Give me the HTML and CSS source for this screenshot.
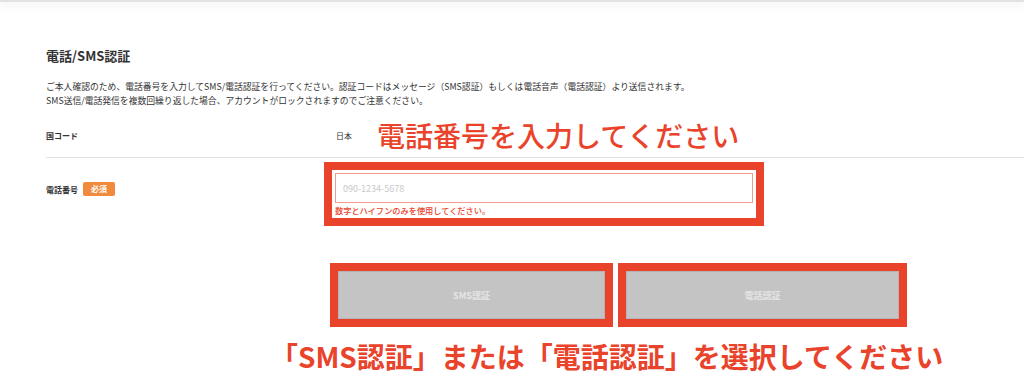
FILE: index.html
```html
<!DOCTYPE html>
<html lang="ja">
<head>
    <meta charset="UTF-8">
    <meta name="viewport" content="width=device-width, initial-scale=1.0">
    <title>電話/SMS認証</title>
    <link rel="stylesheet" href="styles.css">
</head>
<body>
    <div class="topbar"></div>
    <main class="page">
        <h1 class="title">電話/SMS認証</h1>
        <p class="lead">ご本人確認のため、電話番号を入力してSMS/電話認証を行ってください。認証コードはメッセージ（SMS認証）もしくは電話音声（電話認証）より送信されます。<br>SMS送信/電話発信を複数回繰り返した場合、アカウントがロックされますのでご注意ください。</p>

        <div class="row row-country">
            <div class="label">国コード</div>
            <div class="value">日本<span class="note note-top">電話番号を入力してください</span></div>
        </div>

        <div class="row row-phone">
            <div class="label"><span>電話番号</span><span class="badge">必須</span></div>
            <div class="field">
                <div class="mark mark-field">
                    <input class="phone" type="tel" placeholder="090-1234-5678">
                    <p class="error">数字とハイフンのみを使用してください。</p>
                </div>
            </div>
        </div>

        <div class="actions">
            <div class="mark mark-sms"><button class="btn" disabled>SMS認証</button></div>
            <div class="mark mark-tel"><button class="btn" disabled>電話認証</button></div>
        </div>

        <p class="note note-bottom">「SMS認証」または「電話認証」を選択してください</p>
    </main>
</body>
</html>
```

FILE: styles.css
```css
body {
    margin: 0;
    font-family: "Noto Sans CJK JP", "Noto Sans", sans-serif;
    color: #333;
    background: #fff;
}
.topbar {
    height: 2px;
    background: #e2e2e2;
    box-shadow: 0 2px 8px rgba(0, 0, 0, 0.15);
}
.page {
    padding-left: 46px;
}
.title {
    margin: 45px 0 15px;
    font-size: 13px;
    line-height: 18px;
    font-weight: 700;
}
.lead {
    margin: 0;
    font-size: 8.8px;
    line-height: 14px;
}
.row {
    display: flex;
}
.label {
    width: 290px;
    flex-shrink: 0;
    font-size: 8px;
    font-weight: 700;
}
.row-country {
    align-items: center;
    min-height: 44px;
    padding-top: 5px;
    border-bottom: 1px solid #e2e2e2;
}
.value {
    display: flex;
    align-items: center;
    font-size: 8px;
}
.note {
    color: #e9432b;
    font-size: 28px;
    line-height: 34px;
}
.note-top {
    margin-left: 25px;
    font-weight: 500;
}
.row-phone .label {
    display: flex;
    align-items: center;
    gap: 5px;
    height: 14px;
    margin-top: 24px;
}
.badge {
    background: #f08a3c;
    color: #fff;
    font-size: 8px;
    line-height: 14px;
    padding: 0 8px;
    border-radius: 2px;
}
.field {
    margin: 4px 0 0 -12px;
}
.mark {
    border: 8px solid #e9432b;
    box-sizing: border-box;
}
.mark-field {
    width: 440px;
    padding: 3px 3px 2px;
}
.phone {
    display: block;
    width: 100%;
    height: 30px;
    box-sizing: border-box;
    border: 1px solid #f29a8e;
    padding: 0 7px;
    font-family: inherit;
    font-size: 9px;
    outline: none;
}
.phone::placeholder {
    color: #c9c9c9;
}
.error {
    margin: 1px 0 0;
    font-size: 8.2px;
    line-height: 12px;
    font-weight: 500;
    color: #e9432b;
}
.actions {
    display: flex;
    gap: 5px;
    margin: 37px 0 0 284px;
}
.mark-sms {
    width: 283px;
    height: 64px;
}
.mark-tel {
    width: 289px;
    height: 64px;
}
.btn {
    display: block;
    width: 100%;
    height: 100%;
    background: #c4c4c4;
    border: 1px solid #b4b4b4;
    color: #e4e4e4;
    font-family: inherit;
    font-size: 9px;
    font-weight: 700;
}
.note-bottom {
    margin: 12px 0 0 224px;
    font-weight: 700;
}
```
